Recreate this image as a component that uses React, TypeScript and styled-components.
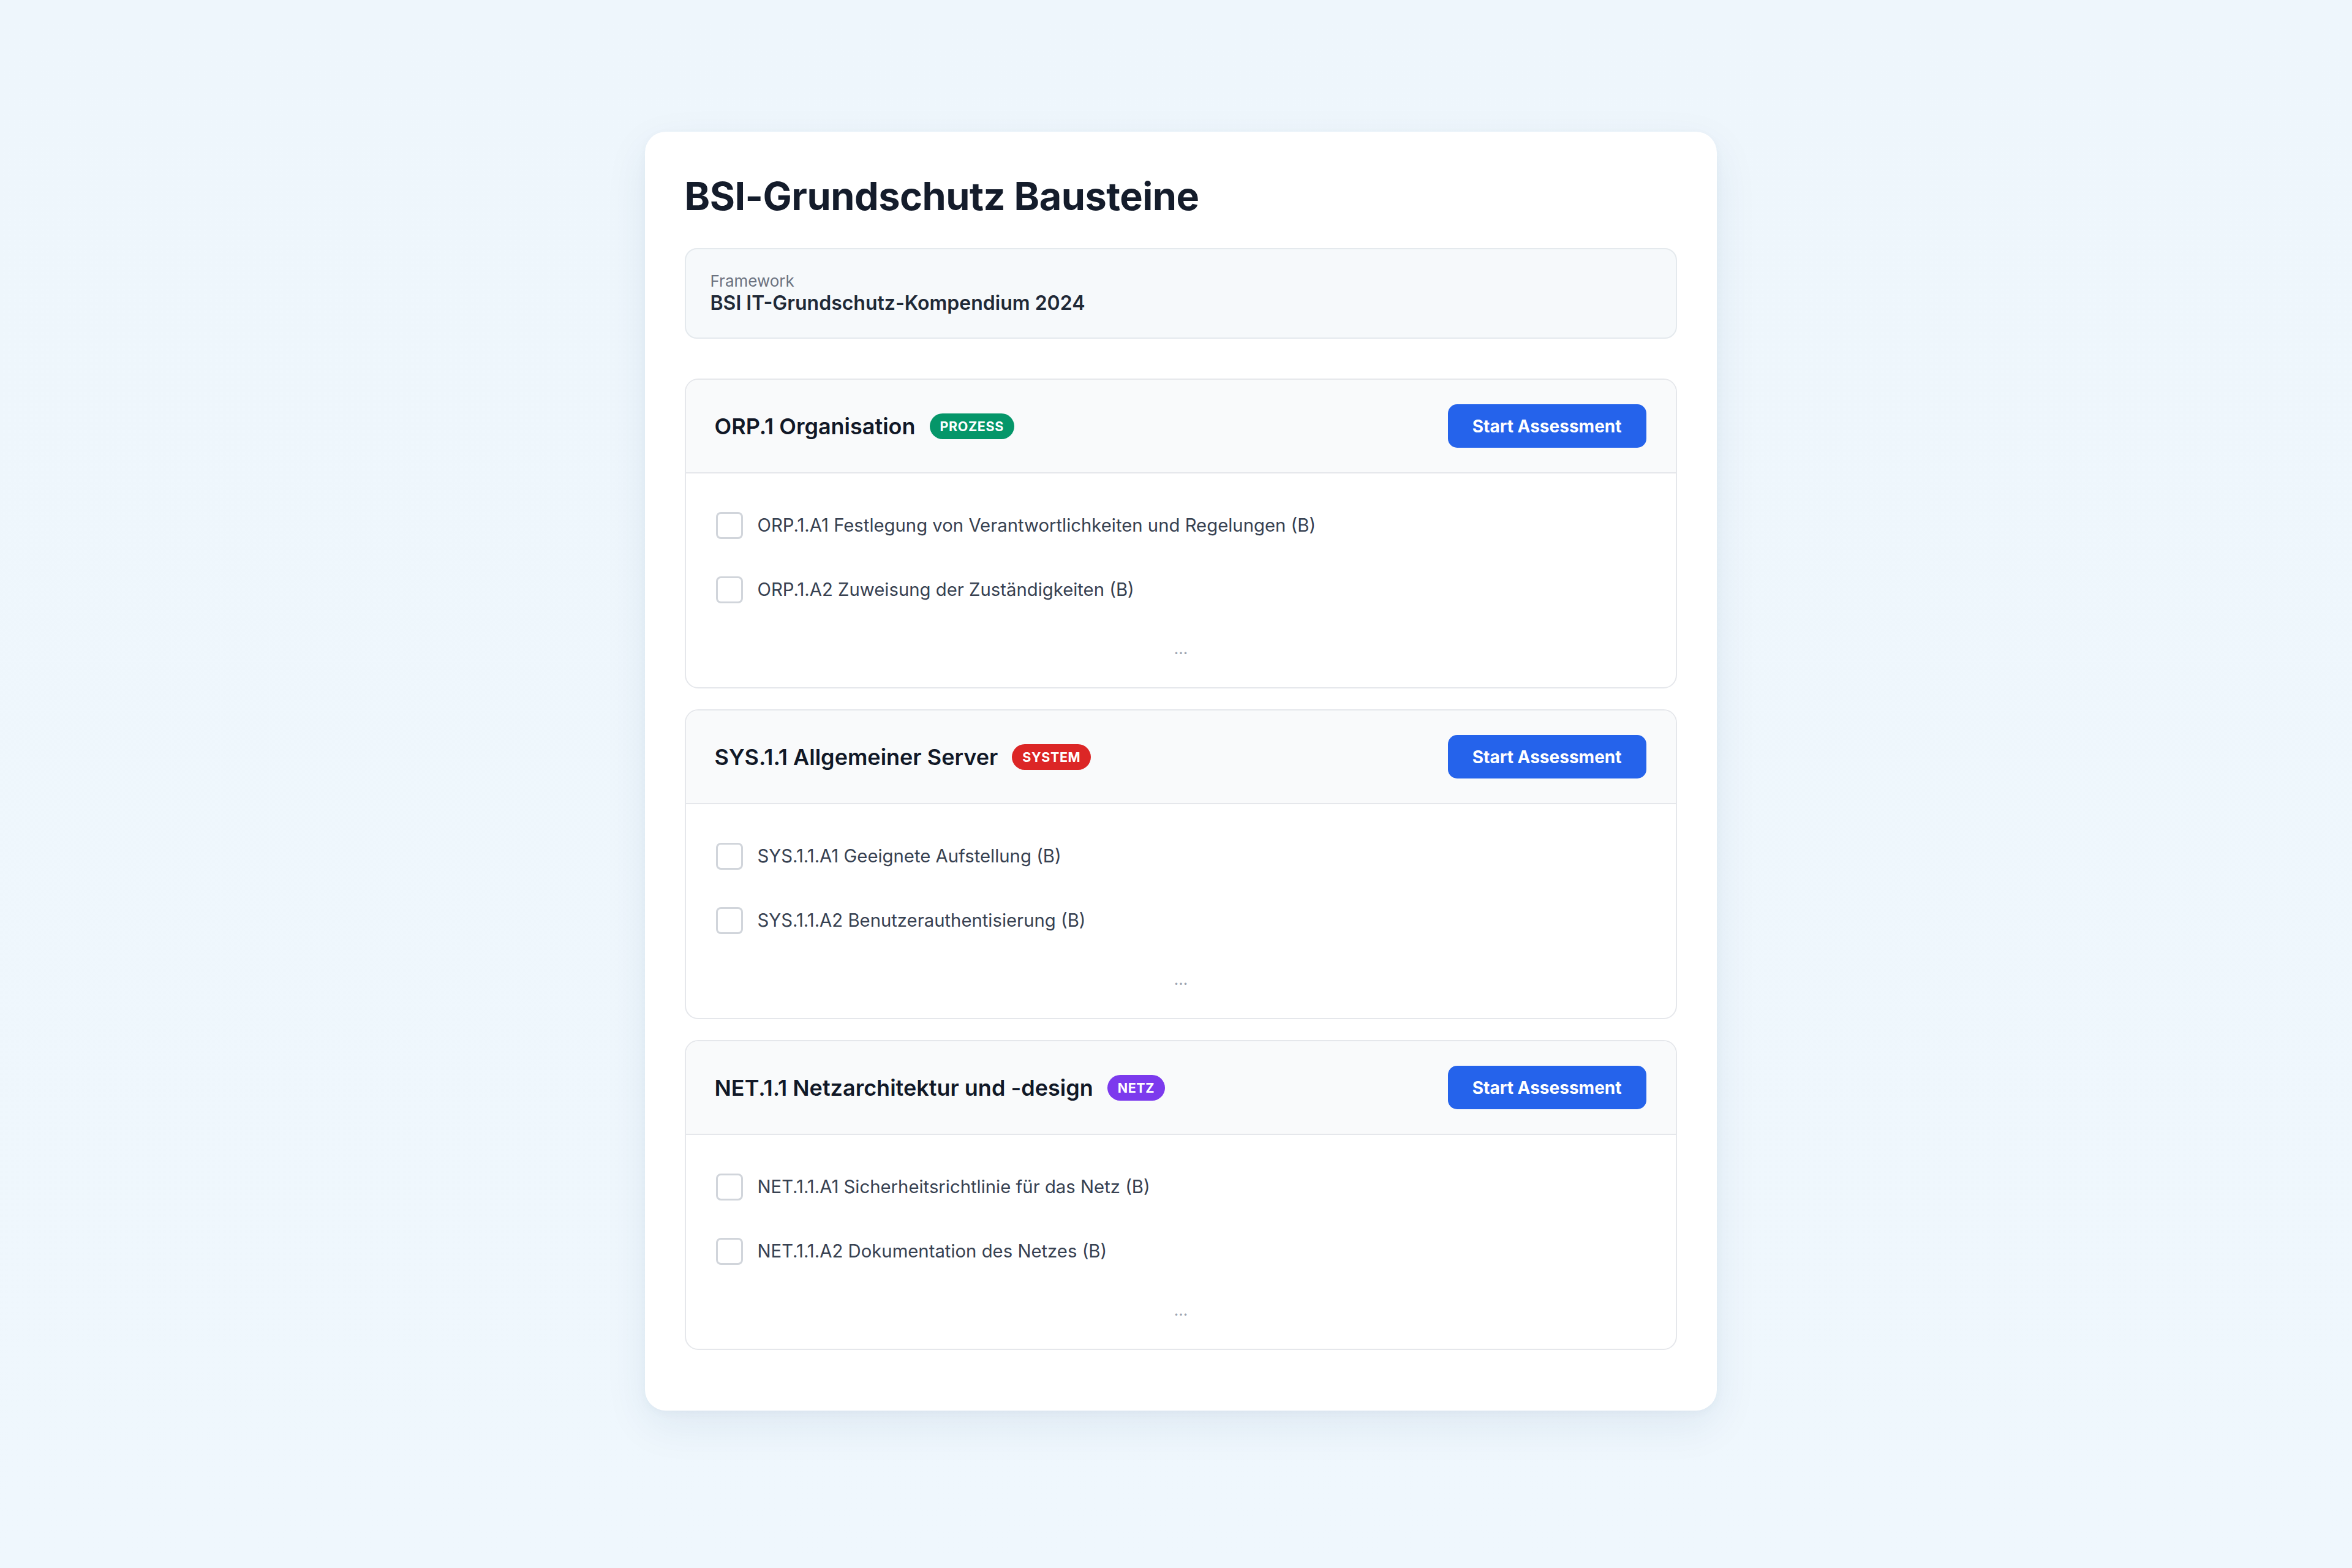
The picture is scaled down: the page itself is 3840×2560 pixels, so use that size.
import styled, { createGlobalStyle } from "styled-components";

type Tone = "prozess" | "system" | "netz";

interface Requirement {
  id: string;
  label: string;
}

interface Module {
  id: string;
  title: string;
  tone: Tone;
  badge: string;
  requirements: Requirement[];
}

const modules: Module[] = [
  {
    id: "ORP.1",
    title: "ORP.1 Organisation",
    tone: "prozess",
    badge: "Prozess",
    requirements: [
      { id: "ORP.1.A1", label: "ORP.1.A1 Festlegung von Verantwortlichkeiten und Regelungen (B)" },
      { id: "ORP.1.A2", label: "ORP.1.A2 Zuweisung der Zuständigkeiten (B)" },
    ],
  },
  {
    id: "SYS.1.1",
    title: "SYS.1.1 Allgemeiner Server",
    tone: "system",
    badge: "System",
    requirements: [
      { id: "SYS.1.1.A1", label: "SYS.1.1.A1 Geeignete Aufstellung (B)" },
      { id: "SYS.1.1.A2", label: "SYS.1.1.A2 Benutzerauthentisierung (B)" },
    ],
  },
  {
    id: "NET.1.1",
    title: "NET.1.1 Netzarchitektur und -design",
    tone: "netz",
    badge: "Netz",
    requirements: [
      { id: "NET.1.1.A1", label: "NET.1.1.A1 Sicherheitsrichtlinie für das Netz (B)" },
      { id: "NET.1.1.A2", label: "NET.1.1.A2 Dokumentation des Netzes (B)" },
    ],
  },
];

const toneColors: Record<Tone, string> = {
  prozess: "#059669",
  system: "#dc2626",
  netz: "#7c3aed",
};

const App = () => {
  return (
    <>
      <GlobalStyle />
      <Page>
        <Panel>
          <Title>BSI-Grundschutz Bausteine</Title>

          <FrameworkBox>
            <FrameworkLabel>Framework</FrameworkLabel>
            <FrameworkValue>BSI IT-Grundschutz-Kompendium 2024</FrameworkValue>
          </FrameworkBox>

          {modules.map((module) => (
            <ModuleCard key={module.id}>
              <ModuleHeader>
                <ModuleTitleRow>
                  <ModuleTitle>{module.title}</ModuleTitle>
                  <Badge $tone={module.tone}>{module.badge}</Badge>
                </ModuleTitleRow>
                <StartButton type="button">Start Assessment</StartButton>
              </ModuleHeader>

              <ModuleBody>
                <RequirementList>
                  {module.requirements.map((req) => (
                    <RequirementRow key={req.id}>
                      <Checkbox type="checkbox" />
                      <RequirementText>{req.label}</RequirementText>
                    </RequirementRow>
                  ))}
                </RequirementList>
                <Ellipsis>...</Ellipsis>
              </ModuleBody>
            </ModuleCard>
          ))}
        </Panel>
      </Page>
    </>
  );
};

const GlobalStyle = createGlobalStyle`
  * {
    box-sizing: border-box;
  }

  body {
    margin: 0;
    background: #eef6fc;
    font-family: Inter, "Noto Sans", "Liberation Sans", sans-serif;
    color: #111827;
  }
`;

const Page = styled.div`
  min-height: 2560px;
  display: flex;
  justify-content: center;
  align-items: flex-start;
  padding: 215px 0 0 15px;
  background: linear-gradient(180deg, #eef6fc 0%, #eff7fd 100%);
`;

const Panel = styled.div`
  width: 1750px;
  background-color: #ffffff;
  border-radius: 34px;
  padding: 68px 65px 65px;
  box-shadow: 0 24px 70px rgba(30, 64, 110, 0.08), 0 4px 14px rgba(30, 64, 110, 0.04);
`;

const Title = styled.h1`
  margin: 0 0 48px 0;
  font-size: 63px;
  line-height: 74px;
  font-weight: 700;
  color: #141c2b;
  letter-spacing: -0.5px;
`;

const FrameworkBox = styled.div`
  background-color: #f6f9fb;
  border: 2px solid #e4e9ed;
  border-radius: 20px;
  padding: 34px 40px 37px;
  margin-bottom: 65px;
`;

const FrameworkLabel = styled.div`
  font-size: 26px;
  line-height: 35px;
  color: #6b7280;
`;

const FrameworkValue = styled.div`
  font-size: 32px;
  line-height: 38px;
  font-weight: 600;
  color: #1f2937;
`;

const ModuleCard = styled.section`
  border: 2px solid #e5e7eb;
  border-radius: 22px;
  overflow: hidden;
  margin-bottom: 34px;
  background-color: #ffffff;
`;

const ModuleHeader = styled.div`
  display: flex;
  align-items: center;
  justify-content: space-between;
  padding: 40px 48px 40px 47px;
  background-color: #f9fafb;
  border-bottom: 2px solid #e5e7eb;
`;

const ModuleTitleRow = styled.div`
  display: flex;
  align-items: center;
  gap: 23px;
`;

const ModuleTitle = styled.h2`
  margin: 0;
  font-size: 36px;
  line-height: 44px;
  font-weight: 600;
  color: #111827;
`;

const Badge = styled.span<{ $tone: Tone }>`
  display: inline-flex;
  align-items: center;
  height: 42px;
  padding: 0 17px;
  border-radius: 999px;
  background-color: ${(props) => toneColors[props.$tone]};
  color: #ffffff;
  font-size: 21.5px;
  font-weight: 700;
  text-transform: uppercase;
  letter-spacing: 0.6px;
`;

const StartButton = styled.button`
  height: 71px;
  padding: 0 40px;
  border: none;
  border-radius: 15px;
  background-color: #2563eb;
  color: #ffffff;
  font-family: inherit;
  font-size: 28px;
  font-weight: 700;
  cursor: pointer;

  &:hover {
    background-color: #1d4ed8;
  }
`;

const ModuleBody = styled.div`
  padding: 63px 48px 50px 49px;
`;

const RequirementList = styled.div`
  display: flex;
  flex-direction: column;
  gap: 61px;
`;

const RequirementRow = styled.label`
  display: flex;
  align-items: center;
  gap: 24px;
  cursor: pointer;
`;

const Checkbox = styled.input`
  appearance: none;
  margin: 0;
  width: 44px;
  height: 44px;
  flex-shrink: 0;
  border: 3px solid #d1d5db;
  border-radius: 8px;
  background-color: #ffffff;
  cursor: pointer;

  &:checked {
    background-color: #2563eb;
    border-color: #2563eb;
  }
`;

const RequirementText = styled.span`
  font-size: 29.3px;
  line-height: 44px;
  color: #374151;
`;

const Ellipsis = styled.div`
  margin-top: 61px;
  text-align: center;
  font-size: 26px;
  line-height: 26px;
  color: #9ca3af;
`;

export default App;
